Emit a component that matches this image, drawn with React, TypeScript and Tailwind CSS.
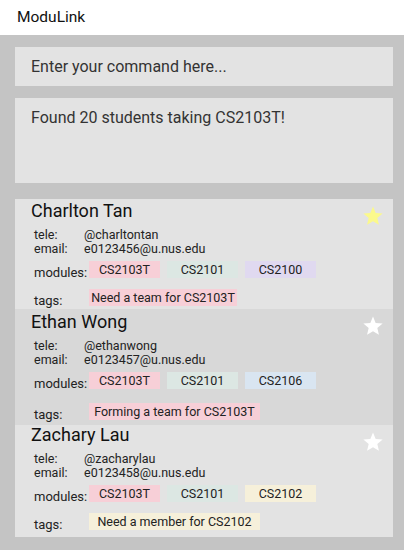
import React from "react";

type Chip = { label: string; color: string };
type Student = {
  name: string;
  tele: string;
  email: string;
  modules: Chip[];
  tag: Chip;
  tagWidth: string;
  fav: boolean;
  bg: string;
  h: string;
  pt: string;
  tagMt: string;
};

const Star = ({ fill }: { fill: string }) => (
  <svg width="22" height="22" viewBox="0 0 24 24">
    <polygon
      points="12,1.5 14.9,8.6 22.5,9.2 16.7,14.1 18.5,21.6 12,17.6 5.5,21.6 7.3,14.1 1.5,9.2 9.1,8.6"
      fill={fill}
    />
  </svg>
);

const students: Student[] = [
  {
    name: "Charlton Tan",
    tele: "@charltontan",
    email: "e0123456@u.nus.edu",
    modules: [
      { label: "CS2103T", color: "bg-[#f7cfd7]" },
      { label: "CS2101", color: "bg-[#dce7e3]" },
      { label: "CS2100", color: "bg-[#e0d9f0]" },
    ],
    tag: { label: "Need a team for CS2103T", color: "bg-[#f7cfd7]" },
    tagWidth: "w-[148px]",
    fav: true,
    bg: "bg-[#e3e3e3]",
    h: "h-[110px]",
    pt: "pt-[2px]",
    tagMt: "mt-[9px]",
  },
  {
    name: "Ethan Wong",
    tele: "@ethanwong",
    email: "e0123457@u.nus.edu",
    modules: [
      { label: "CS2103T", color: "bg-[#f7cfd7]" },
      { label: "CS2101", color: "bg-[#dce7e3]" },
      { label: "CS2106", color: "bg-[#d9e5f1]" },
    ],
    tag: { label: "Forming a team for CS2103T", color: "bg-[#f7cfd7]" },
    tagWidth: "w-[171px]",
    fav: false,
    bg: "bg-[#d8d8d8]",
    h: "h-[116px]",
    pt: "pt-[3px]",
    tagMt: "mt-[12px]",
  },
  {
    name: "Zachary Lau",
    tele: "@zacharylau",
    email: "e0123458@u.nus.edu",
    modules: [
      { label: "CS2103T", color: "bg-[#f7cfd7]" },
      { label: "CS2101", color: "bg-[#dce7e3]" },
      { label: "CS2102", color: "bg-[#f6f0da]" },
    ],
    tag: { label: "Need a member for CS2102", color: "bg-[#f6f0da]" },
    tagWidth: "w-[171px]",
    fav: false,
    bg: "bg-[#e3e3e3]",
    h: "h-[112px]",
    pt: "pt-0",
    tagMt: "mt-[9px]",
  },
];

const Card = ({ s }: { s: Student }) => (
  <div className={`relative ${s.bg} ${s.h} ${s.pt} pl-4`}>
    <div className="text-[18px] leading-[20px] text-[#111]">{s.name}</div>
    <div className="absolute right-[9px] top-[6px]">
      <Star fill={s.fav ? "#fbf98c" : "#ffffff"} />
    </div>
    <div className="mt-[7px] pl-[3px] text-[12.5px] leading-[13.5px] text-[#222]">
      <div className="flex">
        <span className="w-[50px]">tele:</span>
        <span>{s.tele}</span>
      </div>
      <div className="flex">
        <span className="w-[50px]">email:</span>
        <span>{s.email}</span>
      </div>
    </div>
    <div className="mt-[6px] flex items-start pl-[3px] text-[13px] text-[#222]">
      <span className="w-[55px] pt-[5px] leading-[14px]">modules:</span>
      <div className="flex gap-[7px] text-[12.5px]">
        {s.modules.map((m) => (
          <div
            key={m.label}
            className={`${m.color} flex h-[17px] w-[71px] items-center justify-center leading-[17px]`}
          >
            {m.label}
          </div>
        ))}
      </div>
    </div>
    <div className={`${s.tagMt} flex items-start pl-[3px] text-[13px] text-[#222]`}>
      <span className="w-[55px] pt-[5px] leading-[14px]">tags:</span>
      <div
        className={`${s.tag.color} ${s.tagWidth} flex h-[17px] items-center justify-center whitespace-nowrap text-[12.5px] leading-[17px]`}
      >
        {s.tag.label}
      </div>
    </div>
  </div>
);

export default function App() {
  return (
    <div
      className="h-[550px] w-[404px] overflow-hidden bg-[#c4c4c4]"
      style={{ fontFamily: "Roboto, 'Noto Sans', sans-serif" }}
    >
      <div className="flex h-[35px] items-center bg-white pl-[17px] text-[15.5px] text-[#111]">
        ModuLink
      </div>
      <div className="pl-[15px] pr-[11px] pt-[12px]">
        <div className="flex h-[39px] items-center bg-[#e3e3e3] pl-4 text-[16px] text-[#333]">
          Enter your command here...
        </div>
        <div className="mt-[12px] h-[85px] bg-[#e3e3e3] pl-4 pt-[10px] text-[16px] leading-[20px] text-[#333]">
          Found 20 students taking CS2103T!
        </div>
        <div className="mt-[16px] flex flex-col">
          {students.map((s) => (
            <Card key={s.name} s={s} />
          ))}
        </div>
      </div>
    </div>
  );
}
